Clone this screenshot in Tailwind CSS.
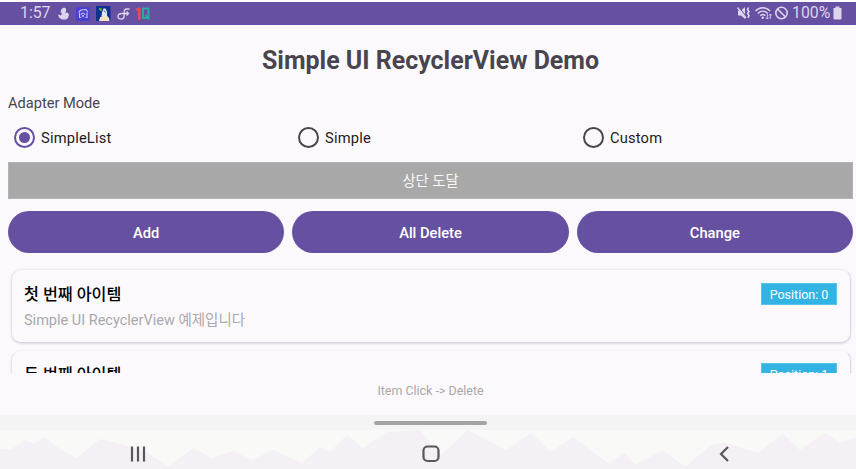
<!DOCTYPE html>
<html lang="ko">
<head>
<meta charset="utf-8">
<title>Simple UI RecyclerView Demo</title>
<script src="https://cdn.jsdelivr.net/npm/@tailwindcss/browser@4"></script>
</head>
<body class="w-[856px] h-[469px] overflow-hidden bg-[#fcf9fd] font-['Roboto','Noto_Sans_CJK_KR',sans-serif] text-[#49454f]">
<div class="flex h-[469px] flex-col pt-[2px]">
  <!-- status bar -->
  <header class="flex h-[23px] shrink-0 items-center bg-[#6650a2] pl-[20px] pr-[14px] text-[#dcd5ec]">
    <span class="w-[37px] pb-[2px] text-[15.800px] leading-[20px] whitespace-nowrap">1:57</span>
    <svg class="h-[22px] w-[96px]" viewBox="57 2 96 22" fill="none">
      <path d="M61.500 8l2.500-1.500 2 1v3l-1 1.500 2.500-.5 1.500 2-1 3.500-2 1.500h-4l-2.500-1.500-1.500-3 1-.5 2 1 1-2-1.500-1.500.500-1.500z" fill="#dcd5ec"/>
      <rect x="76" y="6" width="14" height="14" rx="1.500" fill="#4941d2"/>
      <path d="M78.500 11.500L81 9l5-.5 2 3M79.500 12v4.500h1.500M87 12v4.500h-1.500" stroke="#c9c6f5" stroke-width="1.100"/>
      <path d="M81 14a2 2 0 0 1 4 0" stroke="#c9c6f5"/>
      <circle cx="83" cy="15" r="1.100" fill="#c9c6f5"/>
      <rect x="96" y="5" width="14.500" height="15" fill="#12308d"/>
      <path d="M99 20l1-3.500 2.500-1.500 4-1 2.500 3 .5 3z" fill="#f3e4c4"/>
      <path d="M101.500 15.500l.5-4 1.500-4h2l1.500 3v4.500z" fill="#dce8f6"/>
      <path d="M104 9.500l1.500 2" stroke="#4b64a8"/>
      <path d="M99 8h2v2" stroke="#55c34c" stroke-width="1.500"/>
      <path d="M129.500 8h-3c-2 0-2.300 1.200-2.300 3v4c0 4-6.200 4-6.200 .5 0-2.500 2.500-3 4-3h7M126.500 10.500l2 2-2 2" stroke="#dcd5ec" stroke-width="1.300"/>
      <path d="M135.500 8.500l2.500-2h2.500V19H138V9.500h-2.500z" fill="#ef4565"/>
      <path d="M143 7.500h5.500v9.500H143zM145.500 14l3.500 4.500" stroke="#26aaa0" stroke-width="2"/>
    </svg>
    <svg class="ml-auto h-[22px] w-[54px]" viewBox="736 2.500 54 22" fill="none" stroke="#dcd5ec">
      <path d="M738 10h3l4-3.500v12L741 15h-3z" fill="#dcd5ec" stroke="none"/>
      <path d="M739 7l8 10" stroke="#6650a2" stroke-width="1.200"/>
      <path d="M737.500 7l8.500 10.500" stroke-width="1.300"/>
      <path d="M748.500 7l-1 2 1.500 2-1.500 2 1.500 2-1 2.500" stroke-width="1.600"/>
      <path d="M755.500 10.500c4-4.500 10.500-4.500 14.500 0M757.800 13c3-3 7-3 10 0M760.200 15.200c1.600-1.400 3.600-1.400 5 0" stroke-width="1.500"/>
      <circle cx="762.700" cy="17.200" r="1.200" fill="#dcd5ec" stroke="none"/>
      <path d="M767.300 13.500v5m-1.500-1.500l1.500 1.500 1.500-1.500M770.300 18.500v-5m-1.300 1.500l1.300-1.500 1.300 1.500" stroke-width=".9"/>
      <circle cx="781.500" cy="12.500" r="5.700" stroke-width="1.600"/>
      <path d="M777.500 8.500l8 8" stroke-width="1.600"/>
    </svg>
    <span class="ml-[2px] w-[41px] pb-[1px] text-[15.800px] leading-[20px] whitespace-nowrap">100%</span>
    <svg class="h-[22px] w-[9px]" viewBox="833 2.500 9 22"><path d="M835.500 6h4v1.500h2V18q0 1-1 1h-6q-1 0-1-1V7.500h2z" fill="#dcd5ec"/></svg>
  </header>

  <main class="flex h-[390px] shrink-0 flex-col pl-[8px] pr-[3px]">
    <h1 class="mt-[19px] h-[34px] text-center text-[24.950px] leading-[34px] font-bold whitespace-nowrap">Simple UI RecyclerView Demo</h1>
    <p class="mt-[15px] h-[20px] text-[14.600px] leading-[20px]">Adapter Mode</p>
    <div class="mt-[8px] grid h-[32px] grid-cols-[284.500px_284.500px_1fr] text-[14.700px] tracking-[0.180px] text-[#1d1b20]">
      <div class="flex items-center gap-[6px] pl-[6px]">
        <span class="flex size-[21px] items-center justify-center rounded-full border-2 border-[#6650a2]"><span class="size-[11px] rounded-full bg-[#6650a2]"></span></span><span class="pt-[2px]">SimpleList</span>
      </div>
      <div class="flex items-center gap-[6px] pl-[5.500px]"><span class="size-[21px] rounded-full border-2 border-[#49454f]"></span><span class="pt-[2px]">Simple</span></div>
      <div class="flex items-center gap-[6px] pl-[6px]"><span class="size-[21px] rounded-full border-2 border-[#49454f]"></span><span class="pt-[2px]">Custom</span></div>
    </div>
    <div class="mt-[9px] flex h-[37px] items-center justify-center border border-[#b3b0b6] bg-[#a8a8a8] pt-[2px] text-[14.300px] text-[#faf7fb]">상단 도달</div>
    <div class="mt-[12px] grid h-[42px] grid-cols-3 gap-[8px] text-[14.700px] font-medium text-white">
      <div class="flex items-center justify-center rounded-full bg-[#6650a2] pt-[2px]">Add</div>
      <div class="flex items-center justify-center rounded-full bg-[#6650a2] pt-[2px]">All Delete</div>
      <div class="flex items-center justify-center rounded-full bg-[#6650a2] pt-[2px]">Change</div>
    </div>
    <!-- recycler list, second row is clipped -->
    <div class="mt-[12px] flex h-[108px] shrink-0 flex-col gap-[7px] overflow-hidden pr-[2px] pl-[3px] pt-[4px]">
      <div class="flex h-[74px] shrink-0 justify-between rounded-[10px] border border-t-[#eee7f6] border-r-[#dfdae6] border-b-[#d9d6dc] border-l-[#e6e0ef] pt-[13px] pr-[13px] pl-[12px] shadow-[0_1px_2px_rgba(80,60,110,0.18)]">
        <div>
          <div class="h-[25px] text-[16.200px] leading-[24px] font-medium text-black">첫 번째 아이템</div>
          <div class="text-[14.500px] leading-[26px] text-[#aaa8ab]">Simple UI RecyclerView 예제입니다</div>
        </div>
        <div class="flex h-[22px] w-[76px] items-center justify-center border border-[#5bc2e8] bg-[#33b3e4] pt-[2px] text-[12.500px] text-white">Position: 0</div>
      </div>
      <div class="flex h-[74px] shrink-0 justify-between rounded-[10px] border border-t-[#f7f3fa] border-r-[#dfdae6] border-b-[#d9d6dc] border-l-[#e6e0ef] pt-[12px] pr-[13px] pl-[12px] shadow-[0_1px_2px_rgba(80,60,110,0.18)]">
        <div>
          <div class="h-[25px] text-[16.200px] leading-[24px] font-medium text-black">두 번째 아이템</div>
        </div>
        <div class="flex h-[22px] w-[76px] items-center justify-center border border-[#5bc2e8] bg-[#33b3e4] pt-[2px] text-[12.500px] text-white">Position: 1</div>
      </div>
    </div>
    <p class="mt-[8px] h-[20px] text-center text-[12.450px] leading-[20px] text-[#a9a7ab]">Item Click -&gt; Delete</p>
  </main>

  <!-- gesture strip and navigation bar -->
  <div class="flex h-[15px] shrink-0 justify-center bg-[#f5f4f4] pl-[5px] pt-[6px]"><div class="h-[4px] w-[113px] rounded-full bg-[#a4a3a6]"></div></div>
  <svg class="h-[39px] w-[856px] shrink-0" viewBox="0 430 856 39" fill="none">
    <rect y="430" width="856" height="39" fill="#f9f9f8"/>
    <path d="M0 449L10 450 25 440 34 444 44 437 60 449 77 458 100 439 117 443 147 452 168 467 193 448 212 458 233 451 252 460 273 450 302 463 320 447 330 452 347 435 363 448 387 432 420 430 441 455 468 430 506 450 531 433 551 452 573 437 608 463 625 453 635 465 663 450 685 467 711 445 725 443 758 453 783 434 800 450 825 433 840 443 856 437V469H0z" fill="#f4f0f6"/>
    <path d="M132 446.500v15M138 446.500v15M144 446.500v15" stroke="#59575c" stroke-width="2.200"/>
    <rect x="423.500" y="446.500" width="15" height="14.500" rx="4" stroke="#59575c" stroke-width="2.200"/>
    <path d="M728 447l-7 7 7 7" stroke="#59575c" stroke-width="2.200"/>
  </svg>
</div>
</body>
</html>
